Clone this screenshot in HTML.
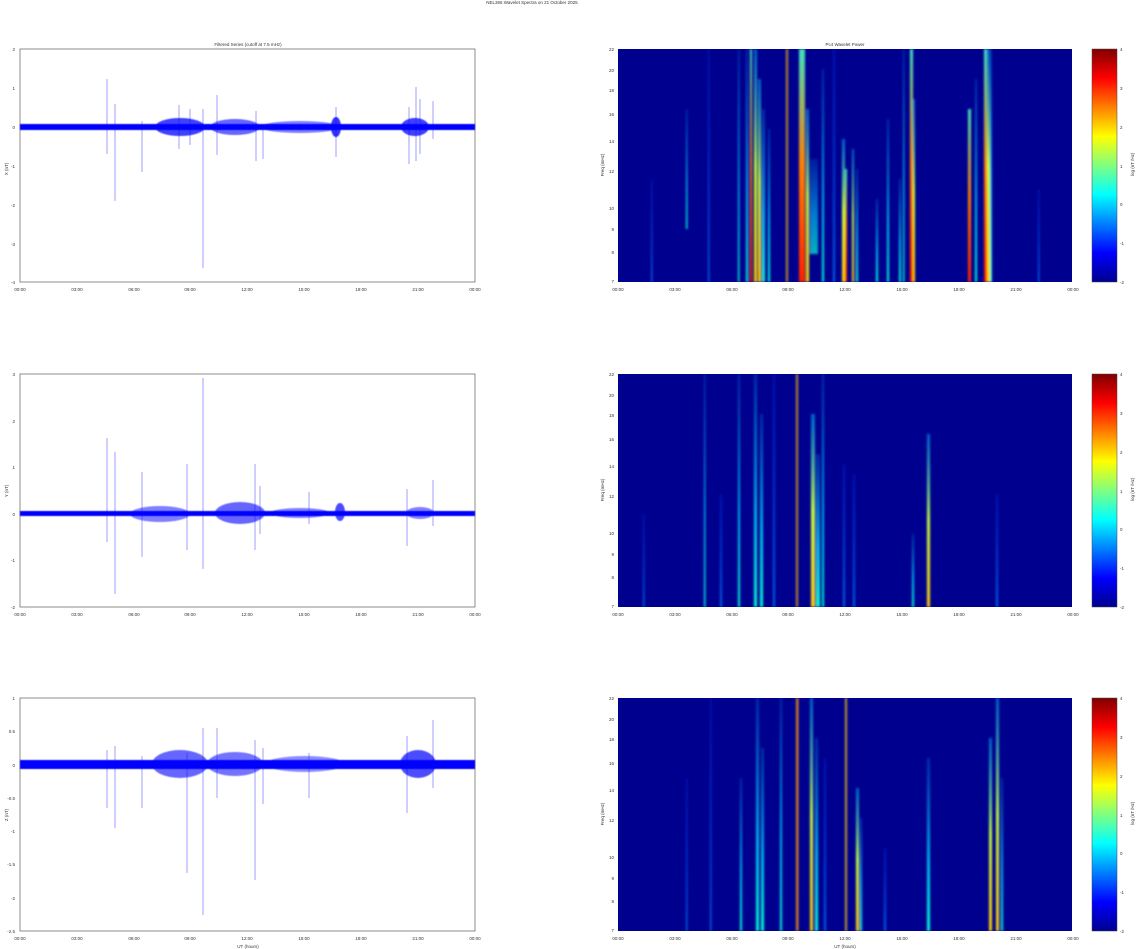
<!DOCTYPE html>
<html><head><meta charset="utf-8"><style>
html,body{margin:0;padding:0;background:#fff;width:1140px;height:949px;overflow:hidden}
svg text{font-family:"Liberation Sans",sans-serif;font-size:4.5px;fill:#333}
</style></head><body>
<svg width="1140" height="949" viewBox="0 0 1140 949" xmlns="http://www.w3.org/2000/svg">
<defs>
<linearGradient id="jet" x1="0" y1="1" x2="0" y2="0">
<stop offset="0" stop-color="#00008f"/><stop offset="0.125" stop-color="#0000ff"/><stop offset="0.375" stop-color="#00ffff"/><stop offset="0.625" stop-color="#ffff00"/><stop offset="0.875" stop-color="#ff0000"/><stop offset="1" stop-color="#800000"/>
</linearGradient>
<linearGradient id="fc" x1="0" y1="0" x2="0" y2="1"><stop offset="0" stop-color="#00c8ff" stop-opacity="0.2"/><stop offset="0.6" stop-color="#00e0ff" stop-opacity="0.8"/><stop offset="1" stop-color="#00ffd0" stop-opacity="1"/></linearGradient>
<linearGradient id="fy" x1="0" y1="0" x2="0" y2="1"><stop offset="0" stop-color="#00c0ff" stop-opacity="0.5"/><stop offset="0.5" stop-color="#c0ff40"/><stop offset="1" stop-color="#ffd000"/></linearGradient>
<linearGradient id="fr" x1="0" y1="0" x2="0" y2="1"><stop offset="0" stop-color="#40e0c0"/><stop offset="0.5" stop-color="#ff8000"/><stop offset="1" stop-color="#ff2000"/></linearGradient>
<linearGradient id="fb" x1="0" y1="0" x2="0" y2="1"><stop offset="0" stop-color="#0040ff" stop-opacity="0.3"/><stop offset="1" stop-color="#0080ff" stop-opacity="0.8"/></linearGradient>
<filter id="bl" x="-10%" y="-10%" width="120%" height="120%"><feGaussianBlur stdDeviation="1"/></filter>
<filter id="nb"><feGaussianBlur stdDeviation="0.6"/></filter>
<g id="xt">
<text x="0" y="242" text-anchor="middle">00:00</text><text x="57" y="242" text-anchor="middle">03:00</text><text x="114" y="242" text-anchor="middle">06:00</text><text x="170" y="242" text-anchor="middle">09:00</text><text x="227" y="242" text-anchor="middle">12:00</text><text x="284" y="242" text-anchor="middle">15:00</text><text x="341" y="242" text-anchor="middle">18:00</text><text x="398" y="242" text-anchor="middle">21:00</text><text x="455" y="242" text-anchor="middle">00:00</text>
</g>
<g id="cb">
<rect x="1092" y="0" width="25" height="233" fill="url(#jet)" stroke="#444" stroke-width="0.5"/>
<text x="1120" y="2">4</text><text x="1120" y="41">3</text><text x="1120" y="80">2</text><text x="1120" y="119">1</text><text x="1120" y="157">0</text><text x="1120" y="196">-1</text><text x="1120" y="235">-2</text>
<text transform="translate(1134,127) rotate(-90)">log (nT /Hz)</text>
</g>
</defs>

<text x="532" y="4" text-anchor="middle">NEL365 Wavelet Spectra on 21 October 2025</text>

<!-- ROW 1 LEFT -->
<g transform="translate(20,49)">
<text x="228" y="-3" text-anchor="middle">Filtered Series (cutoff at 7.5 mHz)</text>
<rect x="0" y="0" width="455" height="233" fill="#fff" stroke="#444" stroke-width="0.6"/>
<text x="-5" y="2" text-anchor="end">2</text><text x="-5" y="41" text-anchor="end">1</text><text x="-5" y="80" text-anchor="end">0</text><text x="-5" y="119" text-anchor="end">-1</text><text x="-5" y="158" text-anchor="end">-2</text><text x="-5" y="197" text-anchor="end">-3</text><text x="-5" y="235" text-anchor="end">-4</text>
<text transform="translate(-12,120) rotate(-90)" text-anchor="middle">X (nT)</text>
<use href="#xt"/>
<g fill="#0000ff" filter="url(#nb)">
<rect x="0" y="75" width="455" height="6"/>
<ellipse cx="160" cy="78" rx="25" ry="9" opacity="0.75"/>
<ellipse cx="215" cy="78" rx="25" ry="8" opacity="0.6"/>
<ellipse cx="280" cy="78" rx="40" ry="6" opacity="0.5"/>
<ellipse cx="395" cy="78" rx="14" ry="9" opacity="0.75"/>
<ellipse cx="316" cy="78" rx="5" ry="10" opacity="0.8"/>
</g>
<g stroke="#0000ff" stroke-width="0.5" opacity="0.75">
<line x1="87" y1="30" x2="87" y2="105"/><line x1="95" y1="55" x2="95" y2="152"/><line x1="122" y1="72" x2="122" y2="123"/><line x1="183" y1="60" x2="183" y2="219"/><line x1="197" y1="46" x2="197" y2="106"/><line x1="236" y1="62" x2="236" y2="112"/><line x1="243" y1="80" x2="243" y2="110"/><line x1="316" y1="58" x2="316" y2="108"/><line x1="396" y1="38" x2="396" y2="112"/><line x1="389" y1="58" x2="389" y2="115"/><line x1="413" y1="52" x2="413" y2="90"/><line x1="159" y1="56" x2="159" y2="100"/><line x1="400" y1="50" x2="400" y2="105"/><line x1="170" y1="60" x2="170" y2="96"/>
</g>
</g>

<!-- ROW 2 LEFT -->
<g transform="translate(20,374)">
<rect x="0" y="0" width="455" height="233" fill="#fff" stroke="#444" stroke-width="0.6"/>
<text x="-5" y="2" text-anchor="end">3</text><text x="-5" y="49" text-anchor="end">2</text><text x="-5" y="95" text-anchor="end">1</text><text x="-5" y="142" text-anchor="end">0</text><text x="-5" y="188" text-anchor="end">-1</text><text x="-5" y="235" text-anchor="end">-2</text>
<text transform="translate(-12,117) rotate(-90)" text-anchor="middle">Y (nT)</text>
<use href="#xt"/>
<g fill="#0000ff" filter="url(#nb)">
<rect x="0" y="137" width="455" height="5"/>
<ellipse cx="140" cy="140" rx="30" ry="8" opacity="0.5"/>
<ellipse cx="220" cy="139" rx="25" ry="11" opacity="0.6"/>
<ellipse cx="280" cy="139" rx="30" ry="5" opacity="0.5"/>
<ellipse cx="320" cy="138" rx="5" ry="9" opacity="0.7"/>
<ellipse cx="400" cy="139" rx="14" ry="6" opacity="0.5"/>
</g>
<g stroke="#0000ff" stroke-width="0.5" opacity="0.75">
<line x1="87" y1="64" x2="87" y2="168"/><line x1="95" y1="78" x2="95" y2="220"/><line x1="122" y1="98" x2="122" y2="183"/><line x1="167" y1="90" x2="167" y2="176"/><line x1="183" y1="4" x2="183" y2="195"/><line x1="235" y1="90" x2="235" y2="176"/><line x1="240" y1="112" x2="240" y2="160"/><line x1="387" y1="115" x2="387" y2="172"/><line x1="413" y1="106" x2="413" y2="152"/><line x1="289" y1="118" x2="289" y2="150"/>
</g>
</g>

<!-- ROW 3 LEFT -->
<g transform="translate(20,698)">
<rect x="0" y="0" width="455" height="233" fill="#fff" stroke="#444" stroke-width="0.6"/>
<text x="-5" y="2" text-anchor="end">1</text><text x="-5" y="35" text-anchor="end">0.5</text><text x="-5" y="69" text-anchor="end">0</text><text x="-5" y="102" text-anchor="end">-0.5</text><text x="-5" y="135" text-anchor="end">-1</text><text x="-5" y="168" text-anchor="end">-1.5</text><text x="-5" y="202" text-anchor="end">-2</text><text x="-5" y="235" text-anchor="end">-2.5</text>
<text transform="translate(-12,117) rotate(-90)" text-anchor="middle">Z (nT)</text>
<use href="#xt"/>
<text x="228" y="250" text-anchor="middle">UT (hours)</text>
<g fill="#0000ff" filter="url(#nb)">
<rect x="0" y="62" width="455" height="9"/>
<ellipse cx="160" cy="66" rx="28" ry="14" opacity="0.6"/>
<ellipse cx="215" cy="66" rx="28" ry="12" opacity="0.55"/>
<ellipse cx="285" cy="66" rx="40" ry="8" opacity="0.45"/>
<ellipse cx="398" cy="66" rx="18" ry="14" opacity="0.7"/>
</g>
<g stroke="#0000ff" stroke-width="0.5" opacity="0.75">
<line x1="87" y1="52" x2="87" y2="110"/><line x1="95" y1="48" x2="95" y2="130"/><line x1="122" y1="58" x2="122" y2="110"/><line x1="167" y1="55" x2="167" y2="175"/><line x1="183" y1="30" x2="183" y2="217"/><line x1="197" y1="30" x2="197" y2="100"/><line x1="235" y1="42" x2="235" y2="182"/><line x1="243" y1="50" x2="243" y2="106"/><line x1="289" y1="55" x2="289" y2="100"/><line x1="387" y1="38" x2="387" y2="115"/><line x1="413" y1="22" x2="413" y2="90"/>
</g>
</g>

<!-- ROW 1 RIGHT -->
<g transform="translate(0,49)">
<text x="845" y="-3" text-anchor="middle">Pc4 Wavelet Power</text>
<svg x="618" y="0" width="454" height="233" viewBox="618 0 454 233" overflow="hidden">
<rect x="618" y="0" width="454" height="233" fill="#00008f"/>
<g filter="url(#bl)">
<rect x="651" y="130" width="1.5" height="103" fill="url(#fb)"/><rect x="686" y="60" width="1.5" height="120" fill="url(#fc)"/><rect x="708" y="0" width="1.5" height="233" fill="url(#fb)"/><rect x="738" y="0" width="1.5" height="233" fill="url(#fc)"/>
<rect x="746" y="0" width="2" height="233" fill="url(#fc)"/><rect x="750" y="0" width="2" height="233" fill="url(#fr)"/><rect x="754" y="0" width="3" height="233" fill="url(#fy)"/><rect x="758" y="30" width="3" height="203" fill="url(#fy)"/><rect x="762" y="60" width="3" height="173" fill="url(#fc)"/><rect x="768" y="80" width="2" height="153" fill="url(#fc)"/>
<rect x="786" y="0" width="2" height="233" fill="#c09020"/>
<rect x="799" y="0" width="3" height="233" fill="url(#fr)"/><rect x="802" y="0" width="3" height="233" fill="url(#fr)"/><rect x="806" y="60" width="3" height="173" fill="url(#fy)"/><rect x="810" y="110" width="8" height="95" fill="url(#fc)" opacity="0.7"/><rect x="822" y="20" width="2" height="213" fill="url(#fc)"/>
<rect x="833" y="0" width="2" height="233" fill="url(#fb)"/><rect x="842" y="90" width="3" height="143" fill="url(#fy)"/><rect x="845" y="120" width="2" height="113" fill="url(#fr)"/><rect x="852" y="100" width="2" height="133" fill="url(#fy)"/><rect x="856" y="120" width="2" height="113" fill="url(#fc)"/>
<rect x="876" y="150" width="2" height="83" fill="url(#fc)"/><rect x="887" y="70" width="2" height="163" fill="url(#fc)"/><rect x="899" y="130" width="2" height="103" fill="url(#fc)"/>
<rect x="903" y="0" width="1.5" height="233" fill="url(#fc)"/><rect x="910" y="0" width="3" height="233" fill="url(#fr)"/><rect x="913" y="50" width="2" height="183" fill="url(#fy)"/>
<rect x="968" y="60" width="3" height="173" fill="url(#fr)"/><rect x="975" y="30" width="2" height="203" fill="url(#fc)"/><rect x="984" y="0" width="3" height="233" fill="url(#fr)"/><rect x="987" y="0" width="3" height="233" fill="url(#fy)"/><rect x="990" y="0" width="2" height="233" fill="url(#fc)"/>
<rect x="1038" y="140" width="1.5" height="93" fill="url(#fb)"/>
</g>
</svg>
<use href="#cb"/>
</g>

<!-- ROW 2 RIGHT -->
<g transform="translate(0,374)">
<svg x="618" y="0" width="454" height="233" viewBox="618 0 454 233" overflow="hidden">
<rect x="618" y="0" width="454" height="233" fill="#00008f"/>
<g filter="url(#bl)">
<rect x="643" y="140" width="1.5" height="93" fill="url(#fb)"/><rect x="704" y="0" width="1.5" height="233" fill="url(#fc)"/><rect x="720" y="120" width="2" height="113" fill="url(#fb)"/><rect x="738" y="0" width="2" height="233" fill="url(#fc)"/>
<rect x="754" y="0" width="3" height="233" fill="url(#fc)"/><rect x="760" y="40" width="3" height="193" fill="url(#fc)"/><rect x="773" y="0" width="2" height="233" fill="url(#fb)"/>
<rect x="796" y="0" width="2" height="233" fill="#c09020"/>
<rect x="811" y="40" width="4" height="193" fill="url(#fy)"/><rect x="816" y="80" width="4" height="153" fill="url(#fc)"/><rect x="822" y="0" width="2" height="233" fill="url(#fc)"/>
<rect x="843" y="90" width="2" height="143" fill="url(#fb)"/><rect x="853" y="100" width="2" height="133" fill="url(#fb)"/><rect x="912" y="160" width="2" height="73" fill="url(#fc)"/>
<rect x="927" y="60" width="3" height="173" fill="url(#fy)"/><rect x="996" y="120" width="2" height="113" fill="url(#fb)"/>
</g>
</svg>
<use href="#cb"/>
</g>

<!-- ROW 3 RIGHT -->
<g transform="translate(0,698)">
<svg x="618" y="0" width="454" height="233" viewBox="618 0 454 233" overflow="hidden">
<rect x="618" y="0" width="454" height="233" fill="#00008f"/>
<g filter="url(#bl)">
<rect x="686" y="80" width="1.5" height="153" fill="url(#fb)"/><rect x="710" y="0" width="1.5" height="233" fill="url(#fb)"/><rect x="740" y="80" width="2" height="153" fill="url(#fc)"/>
<rect x="756" y="0" width="3" height="233" fill="url(#fc)"/><rect x="761" y="50" width="3" height="183" fill="url(#fc)"/><rect x="780" y="0" width="2" height="233" fill="url(#fc)"/>
<rect x="796" y="0" width="2.5" height="233" fill="#d08020"/>
<rect x="810" y="0" width="3" height="233" fill="url(#fy)"/><rect x="815" y="40" width="3" height="193" fill="url(#fc)"/><rect x="824" y="60" width="2" height="173" fill="url(#fb)"/>
<rect x="845" y="0" width="2" height="233" fill="#c0a020"/><rect x="856" y="90" width="3" height="143" fill="url(#fy)"/><rect x="860" y="120" width="2" height="113" fill="url(#fc)"/>
<rect x="884" y="150" width="2" height="83" fill="url(#fb)"/><rect x="927" y="60" width="3" height="173" fill="url(#fc)"/>
<rect x="989" y="40" width="3" height="193" fill="url(#fy)"/><rect x="996" y="0" width="3" height="233" fill="url(#fy)"/><rect x="1001" y="80" width="2" height="153" fill="url(#fc)"/>
</g>
</svg>
<use href="#cb"/>
</g>

<!-- right-axis labels -->
<g>
<text x="614" y="51" text-anchor="end">22</text><text x="614" y="72" text-anchor="end">20</text><text x="614" y="92" text-anchor="end">18</text><text x="614" y="116" text-anchor="end">16</text><text x="614" y="143" text-anchor="end">14</text><text x="614" y="173" text-anchor="end">12</text><text x="614" y="210" text-anchor="end">10</text><text x="614" y="231" text-anchor="end">9</text><text x="614" y="254" text-anchor="end">8</text><text x="614" y="283" text-anchor="end">7</text>
<text transform="translate(604,165) rotate(-90)" text-anchor="middle">Freq (mHz)</text>
<g transform="translate(618,49)"><use href="#xt"/></g>
</g>
<g transform="translate(0,325)">
<text x="614" y="51" text-anchor="end">22</text><text x="614" y="72" text-anchor="end">20</text><text x="614" y="92" text-anchor="end">18</text><text x="614" y="116" text-anchor="end">16</text><text x="614" y="143" text-anchor="end">14</text><text x="614" y="173" text-anchor="end">12</text><text x="614" y="210" text-anchor="end">10</text><text x="614" y="231" text-anchor="end">9</text><text x="614" y="254" text-anchor="end">8</text><text x="614" y="283" text-anchor="end">7</text>
<text transform="translate(604,165) rotate(-90)" text-anchor="middle">Freq (mHz)</text>
<g transform="translate(618,49)"><use href="#xt"/></g>
</g>
<g transform="translate(0,649)">
<text x="614" y="51" text-anchor="end">22</text><text x="614" y="72" text-anchor="end">20</text><text x="614" y="92" text-anchor="end">18</text><text x="614" y="116" text-anchor="end">16</text><text x="614" y="143" text-anchor="end">14</text><text x="614" y="173" text-anchor="end">12</text><text x="614" y="210" text-anchor="end">10</text><text x="614" y="231" text-anchor="end">9</text><text x="614" y="254" text-anchor="end">8</text><text x="614" y="283" text-anchor="end">7</text>
<text transform="translate(604,165) rotate(-90)" text-anchor="middle">Freq (mHz)</text>
<g transform="translate(618,49)"><use href="#xt"/></g>
<text x="845" y="299" text-anchor="middle">UT (hours)</text>
</g>
</svg>
</body></html>
